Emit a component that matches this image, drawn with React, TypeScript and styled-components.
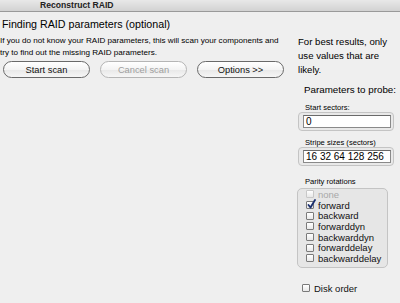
import React from "react";
import styled, { createGlobalStyle } from "styled-components";

const Global = createGlobalStyle`
  html, body {
    margin: 0;
    padding: 0;
    background: #efefef;
  }
  body {
    font-family: "Liberation Sans", Arial, sans-serif;
    color: #000;
  }
`;

const Window = styled.div`
  width: 400px;
  height: 303px;
  overflow: hidden;
  background: #efefef;
  display: flex;
  flex-direction: column;
`;

const TitleBar = styled.div`
  height: 12px;
  flex-shrink: 0;
  background: linear-gradient(#e8e8e8, #d2d2d2);
  border-bottom: 1px solid #9a9a9a;
  box-sizing: border-box;
  padding-left: 40px;
  font-size: 8.6px;
  font-weight: bold;
  line-height: 10px;
  color: #222;
`;

const Body = styled.div`
  flex: 1;
  display: flex;
`;

const LeftPane = styled.div`
  width: 295px;
  flex-shrink: 0;
  padding: 5px 0 0 2px;
`;

const Heading = styled.div`
  font-size: 10.7px;
  line-height: 14px;
`;

const Description = styled.div`
  margin-top: 4px;
  margin-left: -2px;
  font-size: 8.1px;
  line-height: 12px;
`;

const ButtonRow = styled.div`
  display: flex;
  gap: 10px;
  margin-top: 2px;
  padding-left: 1px;
`;

const Button = styled.button<{ $disabled?: boolean }>`
  width: 87px;
  height: 17px;
  box-sizing: border-box;
  border-radius: 9px;
  border: 1px solid ${(p) => (p.$disabled ? "#b5b5b5" : "#6a6a6a")};
  background: linear-gradient(#ffffff, #f4f4f4 50%, #e9e9e9 55%, #f6f6f6);
  font-family: "Liberation Sans", Arial, sans-serif;
  font-size: 9.3px;
  color: ${(p) => (p.$disabled ? "#9e9e9e" : "#111")};
  padding: 0;
`;

const RightPane = styled.div`
  flex: 1;
  min-width: 0;
  display: flex;
  flex-direction: column;
  padding-top: 23px;
`;

const Hint = styled.div`
  font-size: 9.6px;
  line-height: 14px;
  margin-left: 1px;
`;

const Section = styled.div`
  margin: 7px 0 0 7px;
  font-size: 9.8px;
  line-height: 12px;
  white-space: nowrap;
`;

const SmallLabel = styled.div<{ $top: number }>`
  margin: ${(p) => p.$top}px 0 0 8px;
  font-size: 7.6px;
  line-height: 9px;
`;

const FieldWell = styled.div`
  margin: 0 6px 0 1px;
  padding: 2px 2px 2px 4px;
  border: 1px solid #c4c4c4;
  border-radius: 4px;
  background: #e9e9e9;
`;

const Field = styled.div`
  height: 13px;
  box-sizing: border-box;
  background: #fff;
  border: 1px solid #8a8a8a;
  border-top-color: #6a6a6a;
  padding-left: 2px;
  font-size: 10px;
  line-height: 11px;
  white-space: nowrap;
`;

const GroupBox = styled.div`
  margin: 2px 12px 0 0;
  padding: 0 0 3px 8px;
  border: 1px solid #c4c4c4;
  border-radius: 5px;
  background: #e6e6e6;
`;

const CheckRow = styled.label<{ $disabled?: boolean }>`
  display: flex;
  align-items: center;
  gap: 4px;
  height: 10.7px;
  font-size: 9.5px;
  white-space: nowrap;
  color: ${(p) => (p.$disabled ? "#a8a8a8" : "#111")};
`;

const Box = styled.span<{ $disabled?: boolean }>`
  position: relative;
  width: 8px;
  height: 8px;
  box-sizing: border-box;
  flex-shrink: 0;
  border: 1px solid ${(p) => (p.$disabled ? "#c8c8c8" : "#7a7a7a")};
  border-radius: 1px;
  background: linear-gradient(#ffffff, #e8e8e8);
`;

const Tick = styled.svg`
  position: absolute;
  left: 0px;
  top: -3px;
  width: 9px;
  height: 10px;
`;

const DiskOrder = styled(CheckRow)`
  margin: 15px 0 0 5px;
`;

const rotations = [
  "none",
  "forward",
  "backward",
  "forwarddyn",
  "backwarddyn",
  "forwarddelay",
  "backwarddelay",
];

function Check({ label, checked, disabled }: { label: string; checked?: boolean; disabled?: boolean }) {
  return (
    <>
      <Box $disabled={disabled}>
        {checked && (
          <Tick viewBox="0 0 9 10">
            <path d="M1.5 6 L3.5 8.5 L8 1" fill="none" stroke="#1b2f6e" strokeWidth="1.8" strokeLinecap="round" strokeLinejoin="round" />
          </Tick>
        )}
      </Box>
      <span>{label}</span>
    </>
  );
}

export default function App() {
  return (
    <Window>
      <Global />
      <TitleBar>Reconstruct RAID</TitleBar>
      <Body>
        <LeftPane>
          <Heading>Finding RAID parameters (optional)</Heading>
          <Description>
            If you do not know your RAID parameters, this will scan your components and
            <br />
            try to find out the missing RAID parameters.
          </Description>
          <ButtonRow>
            <Button>Start scan</Button>
            <Button $disabled>Cancel scan</Button>
            <Button>Options &gt;&gt;</Button>
          </ButtonRow>
        </LeftPane>
        <RightPane>
          <Hint>
            For best results, only
            <br />
            use values that are
            <br />
            likely.
          </Hint>
          <Section>Parameters to probe:</Section>
          <SmallLabel $top={7}>Start sectors:</SmallLabel>
          <FieldWell>
            <Field>0</Field>
          </FieldWell>
          <SmallLabel $top={7}>Stripe sizes (sectors)</SmallLabel>
          <FieldWell>
            <Field>16 32 64 128 256</Field>
          </FieldWell>
          <SmallLabel $top={11}>Parity rotations</SmallLabel>
          <GroupBox>
            {rotations.map((r) => (
              <CheckRow key={r} $disabled={r === "none"}>
                <Check label={r} checked={r === "forward"} disabled={r === "none"} />
              </CheckRow>
            ))}
          </GroupBox>
          <DiskOrder>
            <Check label="Disk order" />
          </DiskOrder>
        </RightPane>
      </Body>
    </Window>
  );
}
